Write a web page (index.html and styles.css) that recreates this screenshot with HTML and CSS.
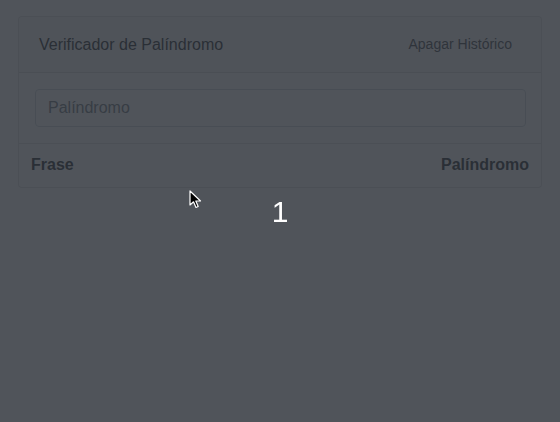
FILE: index.html
```html
<!DOCTYPE html>
<html lang="pt">
<head>
<meta charset="utf-8">
<title>Verificador de Palíndromo</title>
<link rel="stylesheet" href="styles.css">
</head>
<body>
<div class="page">
  <div class="card">
    <div class="card-header">
      <span class="title">Verificador de Palíndromo</span>
      <button class="btn-clear" type="button">Apagar Histórico</button>
    </div>
    <div class="card-body">
      <input class="field" type="text" placeholder="Palíndromo">
    </div>
    <table class="history">
      <thead>
        <tr><th class="col-left">Frase</th><th class="col-right">Palíndromo</th></tr>
      </thead>
    </table>
  </div>
</div>
<div class="backdrop">
  <div class="count">1</div>
</div>
<svg class="cursor" width="14" height="20" viewBox="0 0 14 20">
  <path d="M1 1 L1 15 L4.5 11.8 L7 17.5 L9.2 16.5 L6.8 11 L11.5 11 Z" fill="#000" stroke="#fff" stroke-width="1.2" stroke-linejoin="round"/>
</svg>
</body>
</html>
```
FILE: styles.css
```css
* { box-sizing: border-box; }
html, body {
  margin: 0;
  padding: 0;
  width: 560px;
  height: 422px;
  overflow: hidden;
  background: #ffffff;
  font-family: "Liberation Sans", Arial, sans-serif;
  color: #212529;
}
.page {
  padding: 16px 18px 0 18px;
}
.card {
  border: 1px solid rgba(0,0,0,0.125);
  border-radius: 4px;
  background: #fff;
  overflow: hidden;
}
.card-header {
  display: flex;
  justify-content: space-between;
  align-items: center;
  height: 56px;
  padding: 0 21px 0 20px;
  background: rgba(0,0,0,0.03);
  border-bottom: 1px solid rgba(0,0,0,0.125);
}
.title {
  font-size: 16px;
}
.btn-clear {
  font-family: inherit;
  font-size: 14px;
  color: #3d434a;
  background: transparent;
  border: 0;
  padding: 4px 8px;
  line-height: 21px;
}
.card-body {
  padding: 16px 15px 16px 16px;
  border-bottom: 1px solid rgba(0,0,0,0.125);
}
.field {
  display: block;
  width: 100%;
  height: 38px;
  padding: 6px 12px;
  font-family: inherit;
  font-size: 16px;
  color: #495057;
  border: 1px solid #ced4da;
  border-radius: 4px;
  background: #fff;
}
.field::placeholder { color: #6c757d; }
.history {
  width: 100%;
  border-collapse: collapse;
}
.history th {
  padding: 9px 12px 10px 12px;
  line-height: 24px;
  font-size: 16px;
  font-weight: bold;
  color: #212529;
}
.col-left { text-align: left; }
.col-right { text-align: right; }
.backdrop {
  position: fixed;
  inset: 0;
  background: rgba(44,49,56,0.83);
  display: flex;
  justify-content: center;
}
.count {
  margin-top: 194px;
  font-size: 30px;
  line-height: 36px;
  color: #ffffff;
}
.cursor {
  position: fixed;
  left: 189px;
  top: 190px;
}
```
